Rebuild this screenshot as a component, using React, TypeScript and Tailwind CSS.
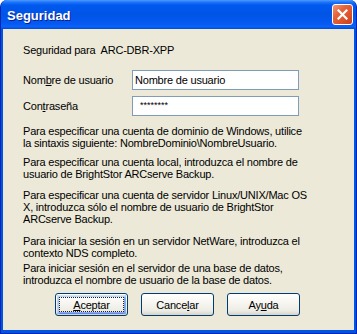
import React from "react";

function Btn({
  children,
  isDefault = false,
}: {
  children: React.ReactNode;
  isDefault?: boolean;
}) {
  return (
    <div className="w-[73px] h-[23px] rounded-[3px] border border-[#003C74] bg-[linear-gradient(180deg,#FFFFFF_0%,#F6F5F0_45%,#ECEBE4_80%,#D8D2C6_100%)] p-[1px]">
      <div
        className={
          isDefault
            ? "w-full h-full rounded-[2px] shadow-[inset_0_1px_0_#CEE7FF,inset_1px_0_0_#BCD4F6,inset_-1px_0_0_#89ADE4,inset_0_-1px_0_#6982EE,inset_0_2px_0_#BCD4F6,inset_2px_0_0_#A9C6F3,inset_-2px_0_0_#7DA2E6,inset_0_-2px_0_#89ADE4] p-[2px]"
            : "w-full h-full rounded-[2px] p-[2px]"
        }
      >
        <div
          className={
            isDefault
              ? "w-full h-full border border-dotted border-[#222] flex items-center justify-center"
              : "w-full h-full border border-transparent flex items-center justify-center"
          }
        >
          <span className="text-[11px] leading-[12px] tracking-[-0.2px] text-black">{children}</span>
        </div>
      </div>
    </div>
  );
}

const U = ({ children }: { children: React.ReactNode }) => (
  <span className="underline underline-offset-[1px] decoration-1">{children}</span>
);

export default function App() {
  return (
    <div className="w-[357px] h-[334px] bg-white font-['Liberation_Sans',Arial,sans-serif]">
      <div className="h-full flex flex-col rounded-t-[7px] overflow-hidden bg-[#0054E3] border-x border-b border-[#0025B0]">
        {/* Title bar */}
        <div className="h-[29px] shrink-0 flex items-center justify-between pl-[6px] pr-[3px] bg-[linear-gradient(180deg,#4D9BFF_0%,#1C73FA_8%,#0058EE_18%,#0055E6_50%,#0559F0_80%,#0A62F8_92%,#0049D9_100%)]">
          <span className="text-white font-bold text-[13px] leading-[15px] pt-[1px] [text-shadow:1px_1px_0_#0A1E8C]">
            Seguridad
          </span>
          <div className="w-[21px] h-[21px] rounded-[3px] border border-white bg-[linear-gradient(135deg,#F29A7B_0%,#E4643C_35%,#DD5128_70%,#C8401C_100%)] flex items-center justify-center">
            <svg width="11" height="11" viewBox="0 0 11 11">
              <path d="M1.5 1.5L9.5 9.5M9.5 1.5L1.5 9.5" stroke="white" strokeWidth="2.2" strokeLinecap="square" />
            </svg>
          </div>
        </div>
        {/* Client area */}
        <div className="flex-1 flex px-[2px] pb-[3px]">
          <div className="flex-1 bg-[#ECE9D8] pl-[20px] pt-[15px] text-black text-[11px] leading-[12px] tracking-[-0.2px]">
            <div className="whitespace-nowrap">Seguridad para&nbsp; ARC-DBR-XPP</div>

            <div className="mt-[14px] h-[20px] flex items-center">
              <div className="w-[109px]">
                Nom<U>b</U>re de usuario
              </div>
              <div className="w-[167px] h-[20px] bg-white border border-[#7F9DB9] flex items-center pl-[2px]">
                Nombre de usuario
              </div>
            </div>
            <div className="mt-[6px] h-[20px] flex items-center">
              <div className="w-[109px]">
                Con<U>t</U>raseña
              </div>
              <div className="w-[167px] h-[20px] bg-white border border-[#7F9DB9] flex items-start pl-[7px] pt-[3px]">
                <span className="text-[9px] leading-[10px] tracking-[0px]">********</span>
              </div>
            </div>

            <p className="mt-[9px] whitespace-nowrap">
              Para especificar una cuenta de dominio de Windows, utilice
              <br />
              la sintaxis siguiente: NombreDominio\NombreUsuario.
            </p>
            <p className="mt-[7px] whitespace-nowrap">
              Para especificar una cuenta local, introduzca el nombre de
              <br />
              usuario de BrightStor ARCserve Backup.
            </p>
            <p className="mt-[9px] whitespace-nowrap">
              Para especificar una cuenta de servidor Linux/UNIX/Mac OS
              <br />
              X, introduzca sólo el nombre de usuario de BrightStor
              <br />
              ARCserve Backup.
            </p>
            <p className="mt-[10px] whitespace-nowrap">
              Para iniciar la sesión en un servidor NetWare, introduzca el
              <br />
              contexto NDS completo.
            </p>
            <p className="mt-[3px] whitespace-nowrap">
              Para iniciar sesión en el servidor de una base de datos,
              <br />
              introduzca el nombre de usuario de la base de datos.
            </p>

            <div className="mt-[7px] ml-[32px] flex gap-[13px]">
              <Btn isDefault>
                <U>A</U>ceptar
              </Btn>
              <Btn>
                Cance<U>l</U>ar
              </Btn>
              <Btn>
                Ay<U>u</U>da
              </Btn>
            </div>
          </div>
        </div>
      </div>
    </div>
  );
}
